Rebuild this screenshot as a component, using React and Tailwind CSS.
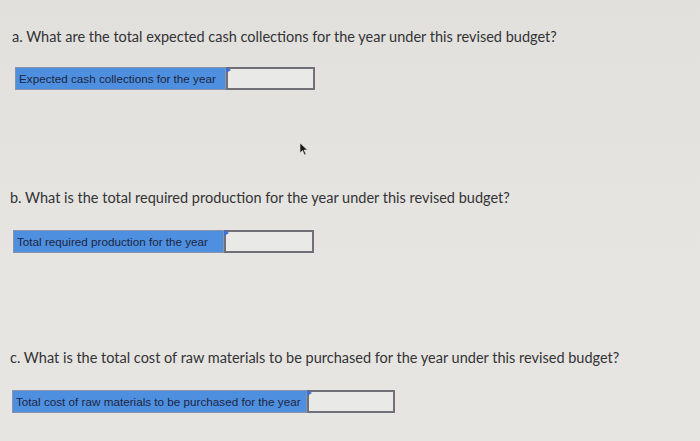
import React from "react";

function Field({ label, labelW, inputW, ml }) {
  return (
    <div className={`flex h-[23px] ${ml}`}>
      <div
        className={`${labelW} h-full bg-[#4f8fe0] border border-[#8a94a8] flex items-center pl-[3px] text-[11.7px] text-[#1c2640] whitespace-nowrap overflow-hidden`}
        style={{ fontFamily: '"Liberation Sans", Arial, sans-serif' }}
      >
        {label}
      </div>
      <div className={`relative ${inputW} h-full bg-[#e9e9e7] border-2 border-[#6f7078]`}>
        <svg className="absolute -left-[2px] -top-[2px]" width="5" height="6" viewBox="0 0 5 6">
          <path d="M0 0 L5 3 L0 6 Z" fill="#3b6fd0" />
        </svg>
      </div>
    </div>
  );
}

export default function App() {
  return (
    <div
      className="relative w-[700px] h-[441px] overflow-hidden bg-gradient-to-b from-[#e1e0dc] via-[#e5e4e0] to-[#e6e5e1] pt-[28px] px-[10px] text-[#333336]"
      style={{ fontFamily: 'Lato, "Open Sans", sans-serif' }}
    >
      <p className="ml-[2px] text-[14.5px] leading-[18px] whitespace-nowrap">
        a. What are the total expected cash collections for the year under this revised budget?
      </p>
      <div className="mt-[21px]">
        <Field label="Expected cash collections for the year" labelW="w-[211px]" inputW="w-[89px]" ml="ml-[5px]" />
      </div>

      <p className="mt-[99px] text-[14.5px] leading-[18px] whitespace-nowrap">
        b. What is the total required production for the year under this revised budget?
      </p>
      <div className="mt-[23px]">
        <Field label="Total required production for the year" labelW="w-[211px]" inputW="w-[90px]" ml="ml-[3px]" />
      </div>

      <p className="mt-[96px] text-[14.5px] leading-[18px] whitespace-nowrap">
        c. What is the total cost of raw materials to be purchased for the year under this revised budget?
      </p>
      <div className="mt-[23px]">
        <Field label="Total cost of raw materials to be purchased for the year" labelW="w-[295px]" inputW="w-[88px]" ml="ml-[2px]" />
      </div>

      <svg className="absolute left-[299px] top-[142px]" width="10" height="14" viewBox="0 0 10 14">
        <path d="M1 1 L1 11 L3.5 8.5 L5.5 13 L7 12.3 L5 8 L8.5 8 Z" fill="#1a1a1a" stroke="#e5e4e0" strokeWidth="0.6" />
      </svg>
    </div>
  );
}
